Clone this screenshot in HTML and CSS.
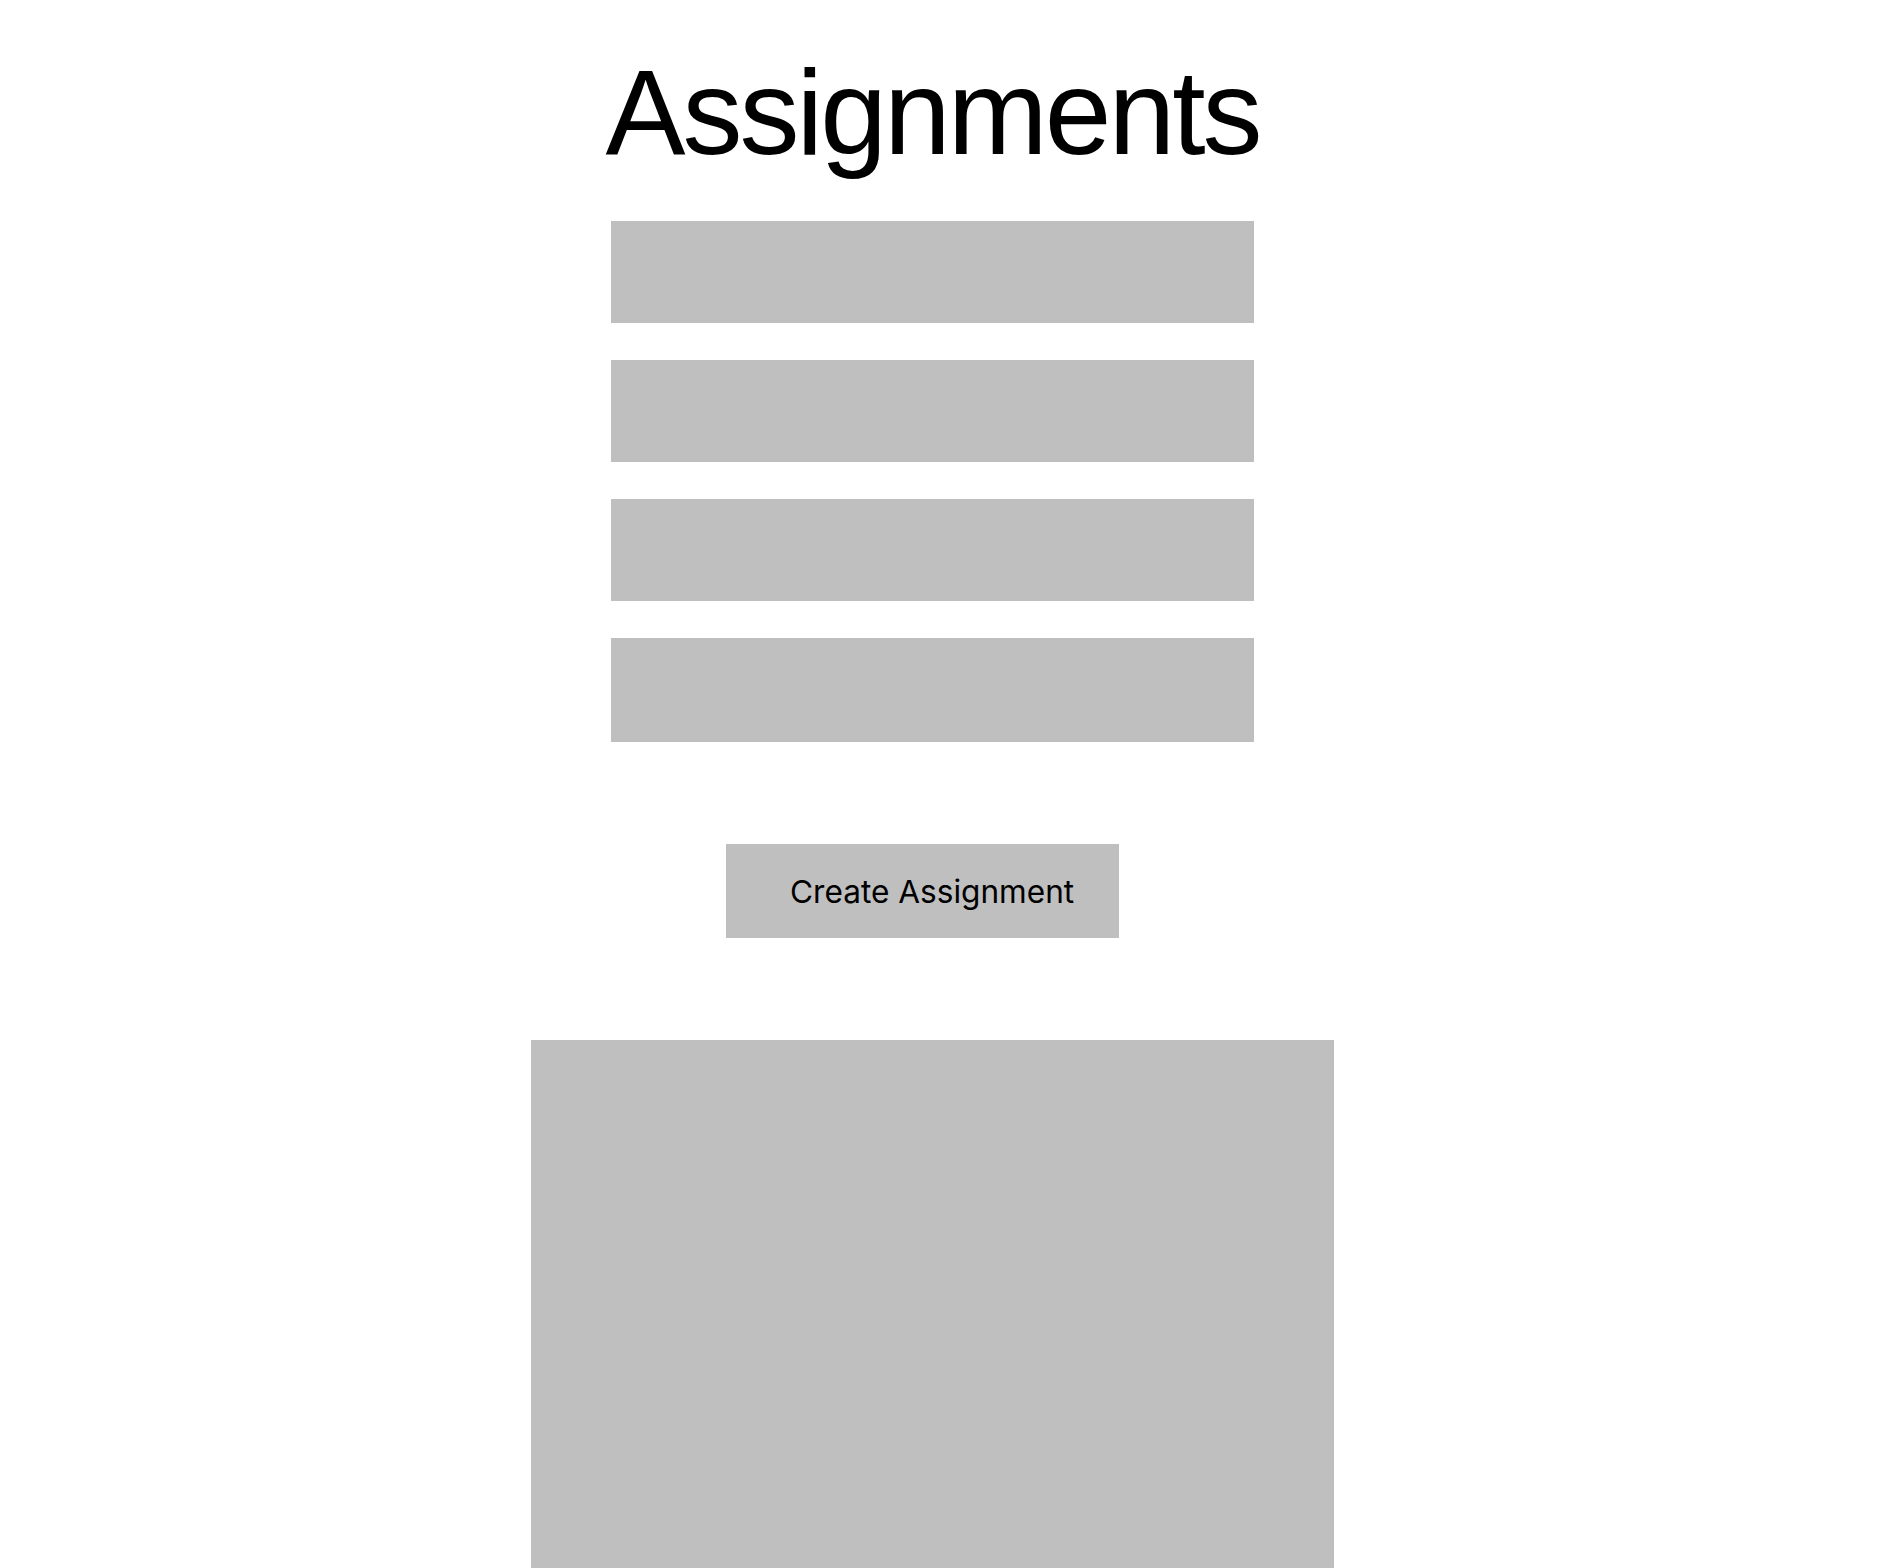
FILE: index.html
```html
<!DOCTYPE html>
<html lang="en">
<head>
<meta charset="utf-8">
<title>Assignments</title>
<link rel="stylesheet" href="styles.css">
</head>
<body>
<main class="page">
  <h1 class="title">Assignments</h1>
  <form class="fields">
    <div class="field"></div>
    <div class="field"></div>
    <div class="field"></div>
    <div class="field field-tall"></div>
  </form>
  <button class="create-btn" type="button">Create Assignment</button>
  <section class="panel"></section>
</main>
</body>
</html>
```

FILE: styles.css
```css
html, body {
  margin: 0;
  padding: 0;
  background: #ffffff;
}

body {
  font-family: "Liberation Sans", Arial, sans-serif;
  color: #000000;
}

.page {
  width: 1865px;
  display: flex;
  flex-direction: column;
  align-items: center;
}

.title {
  margin: 46px 0 0 0;
  font-family: "Liberation Sans", Arial, sans-serif;
  font-weight: 400;
  font-size: 120px;
  line-height: 132px;
  letter-spacing: -3px;
}

.fields {
  margin: 43px 0 0 0;
  display: flex;
  flex-direction: column;
  gap: 37px;
}

.field {
  width: 643px;
  height: 102px;
  background: #bfbfbf;
}

.field-tall {
  height: 104px;
}

.create-btn {
  margin: 102px 20px 0 0;
  width: 393px;
  height: 94px;
  padding: 0 0 0 64px;
  border: none;
  background: #bfbfbf;
  color: #000000;
  text-align: left;
  font-family: Inter, "Liberation Sans", sans-serif;
  font-size: 31.6px;
  font-weight: 400;
}

.panel {
  margin-top: 102px;
  width: 803px;
  height: 600px;
  background: #bfbfbf;
}
```
